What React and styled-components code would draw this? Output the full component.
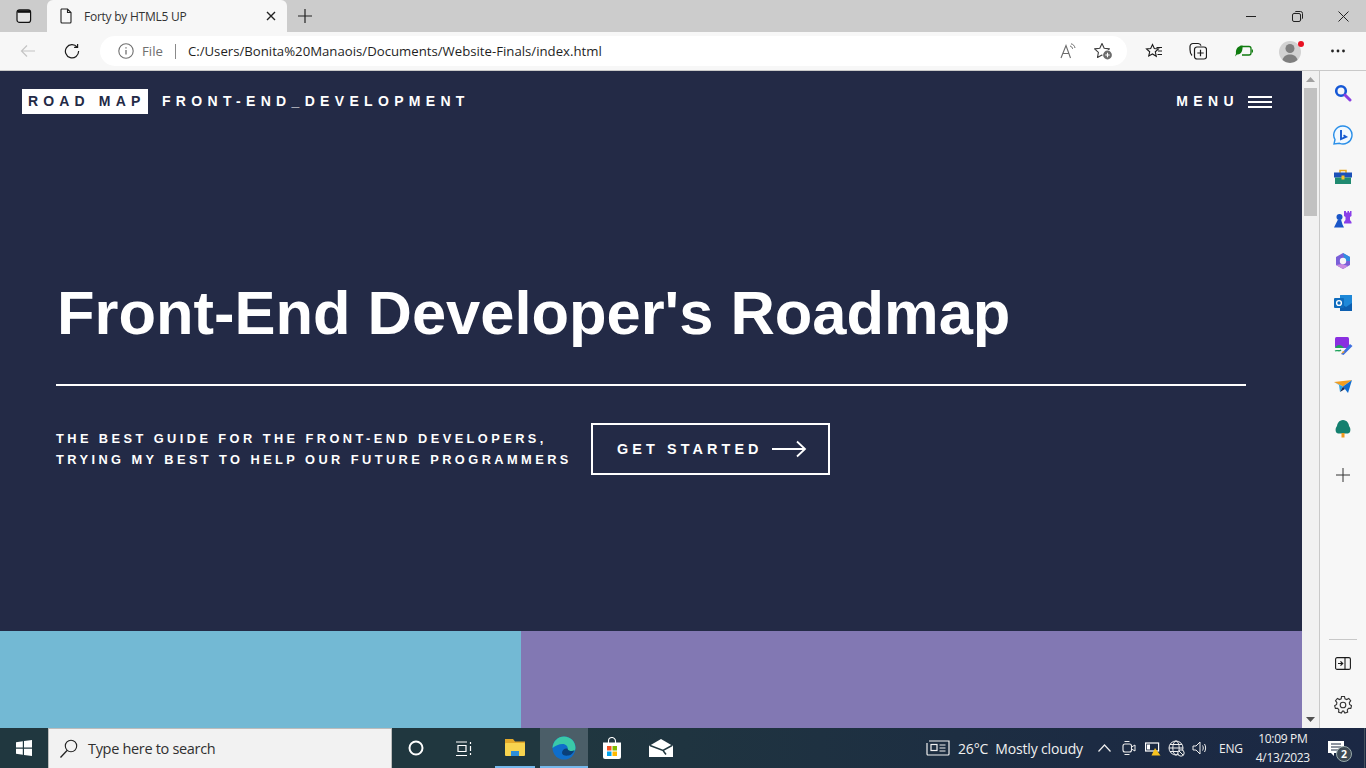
import React from "react";
import styled, { createGlobalStyle } from "styled-components";

const Global = createGlobalStyle`
  html, body { margin: 0; padding: 0; height: 100%; overflow: hidden; background: #232a46; }
  * { box-sizing: border-box; }
`;
const ui = `"Open Sans", "Noto Sans", sans-serif`;
const web = `"Liberation Sans", Arial, sans-serif`;

const Screen = styled.div`width:1366px;height:768px;display:flex;flex-direction:column;overflow:hidden;font-family:${ui};`;

const TabStrip = styled.div`height:32px;flex:none;background:#cccccc;display:flex;align-items:flex-end;`;
const TabToggle = styled.div`width:47px;height:32px;display:flex;align-items:center;justify-content:center;`;
const Tab = styled.div`width:240px;height:32px;background:#f7f7f7;border-radius:6px 6px 0 0;display:flex;align-items:center;padding:0 11px 0 12px;`;
const TabTitle = styled.span`flex:1;margin-left:11px;font-size:12px;letter-spacing:-.25px;color:#333;white-space:nowrap;`;
const NewTab = styled.div`width:36px;height:32px;display:flex;align-items:center;justify-content:center;`;
const Spacer = styled.div`flex:1;`;
const WinButton = styled.div`width:46px;height:32px;display:flex;align-items:center;justify-content:center;`;

const Toolbar = styled.div`height:39px;flex:none;background:#f7f7f7;border-bottom:1px solid #c9c9c9;display:flex;align-items:center;padding-left:3px;`;
const NavButton = styled.div`width:${p=>p.$w||44}px;height:30px;display:flex;align-items:center;justify-content:center;flex:none;`;
const Address = styled.div`width:1027px;height:30px;margin-left:9px;background:#fff;border-radius:15px;display:flex;align-items:center;padding-left:18px;font-size:13.2px;color:#1f1f1f;flex:none;`;
const FileLabel = styled.span`color:#6f6f6f;margin-left:8px;`;
const Sep = styled.span`width:1px;height:15px;background:#8a8a8a;margin:0 12px;`;
const Url = styled.span`flex:1;white-space:nowrap;`;
const AddressIcons = styled.div`display:flex;align-items:center;gap:18px;padding-right:14px;`;
const ToolIcons = styled.div`display:flex;align-items:center;margin-left:5px;`;

const Main = styled.div`flex:1;display:flex;min-height:0;`;
const Page = styled.div`width:1302px;display:flex;flex-direction:column;background:#232a46;font-family:${web};`;
const Hero = styled.section`height:560px;flex:none;color:#fff;display:flex;flex-direction:column;`;
const Header = styled.header`height:60px;display:flex;align-items:flex-start;padding:18px 30px 0 22px;font-weight:700;font-size:14px;`;
const Logo = styled.div`width:126px;height:25px;background:#fff;color:#232a46;letter-spacing:5.15px;padding-left:6px;line-height:24px;white-space:nowrap;`;
const Brand = styled.div`margin-left:14px;letter-spacing:5.32px;line-height:24px;white-space:nowrap;`;
const MenuLink = styled.div`margin-left:auto;display:flex;align-items:center;letter-spacing:5.4px;line-height:24px;`;
const Burger = styled.span`display:flex;flex-direction:column;gap:3px;width:24px;margin-left:9px;margin-top:2px;
  i{display:block;height:2px;background:#fff;}`;
const HeroBody = styled.div`padding:138px 56px 0 56px;`;
const Title = styled.h1`margin:0;padding-left:1px;font-size:61.45px;line-height:88px;font-weight:700;white-space:nowrap;`;
const Rule = styled.div`height:2px;background:#fff;margin-top:27px;`;
const Lead = styled.div`display:flex;align-items:center;margin-top:37px;`;
const Tagline = styled.p`margin:0;font-size:12.8px;font-weight:700;letter-spacing:3.43px;line-height:21px;white-space:nowrap;width:535px;`;
const Cta = styled.div`width:239px;height:52px;border:2px solid #fff;display:flex;align-items:center;padding-left:24px;font-size:14.4px;font-weight:700;letter-spacing:4.1px;white-space:nowrap;`;
const Tiles = styled.div`flex:1;display:flex;`;
const Tile = styled.div`width:${p=>p.$w}px;flex:${p=>p.$w?"none":"1"};background:${p=>p.$c};`;

const Scrollbar = styled.div`width:17px;background:#f1f1f1;display:flex;flex-direction:column;align-items:center;`;
const Arrow = styled.div`height:17px;flex:none;display:flex;align-items:center;justify-content:center;`;
const Thumb = styled.div`width:13px;height:128px;background:#c1c1c1;`;
const Sidebar = styled.aside`width:47px;flex:none;background:#f7f7f7;border-left:1px solid #c9c9c9;display:flex;flex-direction:column;align-items:center;`;
const SideIcon = styled.div`height:${p=>p.$h||42}px;width:100%;flex:none;display:flex;align-items:center;justify-content:center;`;
const SideRule = styled.div`width:28px;height:1px;background:#c8c8c8;margin-bottom:4px;`;

const Taskbar = styled.footer`height:40px;flex:none;display:flex;align-items:stretch;background:linear-gradient(90deg,#20373f 0%,#20373f 40%,#1c2b43 80%,#1b2844 100%);color:#fff;font-size:13px;`;
const Start = styled.div`width:48px;display:flex;align-items:center;justify-content:center;`;
const Search = styled.div`width:344px;background:#f2f2f2;border:1px solid #bcbcbc;border-width:1px 1px 0;display:flex;align-items:center;padding-left:10px;color:#303030;font-size:14.5px;letter-spacing:-.32px;`;
const SearchText = styled.span`margin-left:10px;`;
const TaskIcon = styled.div`width:${p=>p.$w||49}px;display:flex;align-items:center;justify-content:center;background:${p=>p.$active?"#4b5e68":"transparent"};box-shadow:${p=>p.$line?"inset 0 -2px 0 #76b9ed":"none"};margin-left:${p=>p.$ml||0}px;flex:none;`;
const Tray = styled.div`flex:1;display:flex;align-items:center;padding-left:240px;white-space:nowrap;`;
const Weather = styled.span`font-size:14px;letter-spacing:-.15px;color:#f0f0f0;margin-left:8px;`;
const TrayItem = styled.span`display:flex;align-items:center;justify-content:center;margin-left:${p=>p.$ml||0}px;flex:none;`;
const Lang = styled.span`font-size:12px;margin-left:11px;letter-spacing:-.2px;color:#eee;`;
const Clock = styled.span`font-size:12px;letter-spacing:-.3px;line-height:19px;text-align:center;margin-left:13px;color:#f0f0f0;`;
const Notif = styled.span`position:relative;display:flex;margin-left:18px;`;
const NotifBadge = styled.span`position:absolute;left:8px;top:5px;width:16px;height:16px;border-radius:50%;background:#3e4a55;border:1px solid #9aa;font-size:10.5px;font-weight:700;line-height:14px;text-align:center;`;
const EndStrip = styled.span`width:1px;align-self:stretch;background:#44525e;margin-left:19px;`;

const Svg = styled.svg`color:${p=>p.$c||"inherit"};margin-left:${p=>p.$ml||0}px;flex:none;`;
const S = ({w=16,h=16,children,...r}) => <Svg width={w} height={h} viewBox={`0 0 ${w} ${h}`} fill="none" stroke="currentColor" {...r}>{children}</Svg>;

export default function App(){
  return <Screen><Global/>
    <TabStrip>
      <TabToggle><S w={16} h={16} $c="#111"><rect x="1" y="1.800" width="13.600" height="12.600" rx="2.500" strokeWidth="1.200" fill="#e4e4e4"/><rect x="1.500" y="2.200" width="12.600" height="2.600" fill="#111" stroke="none"/></S></TabToggle>
      <Tab>
        <S w={14} h={16} $c="#222"><path d="M2.500 1h6l3.500 3.500V14a1 1 0 0 1-1 1H3a1 1 0 0 1-1-1V2a1 1 0 0 1 .5-1zM8.500 1v3.500H12" strokeWidth="1.100"/></S>
        <TabTitle>Forty by HTML5 UP</TabTitle>
        <S w={10} h={10} $c="#222"><path d="M1 1l8 8M9 1l-8 8" strokeWidth="1.400"/></S>
      </Tab>
      <NewTab><S w={16} h={16} $c="#222"><path d="M8 1v14M1 8h14" strokeWidth="1.200"/></S></NewTab>
      <Spacer/>
      <WinButton><S w={10} h={10} $c="#222"><path d="M0 5.500h10" strokeWidth="1"/></S></WinButton>
      <WinButton><S w={11} h={11} $c="#222"><rect x=".5" y="2.500" width="8" height="8" rx="1.500"/><path d="M3 1.200c.2-.5.6-.7 1-.7h4.500a2 2 0 0 1 2 2V7c0 .4-.2.8-.7 1"/></S></WinButton>
      <WinButton><S w={11} h={11} $c="#222"><path d="M.5.5l10 10M10.500.5l-10 10" strokeWidth="1"/></S></WinButton>
    </TabStrip>
    <Toolbar>
      <NavButton $w={50}><S w={16} h={14} $c="#c4c4c4"><path d="M15 7H1.500M7 1.500L1.500 7 7 12.500" strokeWidth="1.200"/></S></NavButton>
      <NavButton $w={38}><S w={16} h={16} $c="#1c1c1c"><path d="M13.200 4.200A6.600 6.600 0 1 0 14.600 8M13.600 .9v3.500h-3.500" strokeWidth="1.200"/></S></NavButton>
      <Address>
        <S w={16} h={16} $c="#707070"><circle cx="8" cy="8" r="7.200" strokeWidth="1.100"/><path d="M8 7v4.500M8 4.200v1.400" strokeWidth="1.300"/></S>
        <FileLabel>File</FileLabel><Sep/>
        <Url>C:/Users/Bonita%20Manaois/Documents/Website-Finals/index.html</Url>
        <AddressIcons>
          <S w={16} h={16} $c="#6b6b6b"><path d="M1 15L6 2.500 10.500 15M2.700 10.500h6.400" strokeWidth="1.100"/><path d="M10 3c1.500.4 2.300 1.300 2.600 2.800M11 .8c2.200.5 3.600 2 4 4.200" strokeWidth="1"/></S>
          <S w={19} h={18} $c="#3c3c3c"><path d="M8 1.500l2.200 4.700 5.200.7-3.800 3.500.9 5.100L8 13l-4.500 2.500.9-5.100L.6 6.900l5.200-.7z" strokeWidth="1.100" strokeLinejoin="round"/><circle cx="13.500" cy="13" r="5.200" fill="#fff" stroke="none"/><circle cx="13.500" cy="13" r="4.400" fill="#6b6b6b" stroke="none"/><path d="M13.500 10.800v4.400M11.300 13h4.400" stroke="#fff" strokeWidth="1.100"/></S>
        </AddressIcons>
      </Address>
      <ToolIcons>
        <NavButton $w={44}><S w={18} h={16} $c="#1a1a1a"><path d="M7.500 1.500l1.800 4 4.200.5-3.200 2.800 1 4.500-3.800-2.300L3.700 13l1-4.200L1.500 6l4.200-.5z" strokeWidth="1.100"/><path d="M11.500 4.500h5.500M13 8h4M12.500 11.500h4.500" strokeWidth="1.100"/></S></NavButton>
        <NavButton $w={44}><S w={18} h={18} $c="#1a1a1a"><path d="M3 13.500C1.500 12 1 10 1 7.500V4.500A3 3 0 0 1 4 1.500h5a3 3 0 0 1 3 2.200" strokeWidth="1.200"/><rect x="5.500" y="5" width="12" height="12" rx="2.500" strokeWidth="1.200"/><path d="M11.500 7.800v6.400M8.300 11h6.400" strokeWidth="1.200"/></S></NavButton>
        <NavButton $w={48}><S w={18} h={12} $c="#0f7b0f"><path d="M5 1.500h9a2 2 0 0 1 2 2v4.500a2 2 0 0 1-2 2H7" strokeWidth="1.300"/><path d="M17.300 4.500v3" strokeWidth="1.300"/><path d="M7.500.5C3 1 .5 3.500 1 8.500L0 11.500l2-2C6 10 8 6 7.500.5z" fill="currentColor" stroke="none"/></S></NavButton>
        <NavButton $w={48}><S w={26} h={26} $c="#8c8c8c"><circle cx="11" cy="14" r="11" fill="#d2d2d2" stroke="none"/><circle cx="11" cy="10.500" r="4.500" fill="#7f7f7f" stroke="none"/><path d="M3.500 22c1-4 4-5.500 7.500-5.500s6.500 1.500 7.500 5.500a11 11 0 0 1-15 0z" fill="#7f7f7f" stroke="none"/><circle cx="22" cy="6" r="3" fill="#e81123" stroke="none"/></S></NavButton>
        <NavButton $w={44}><S w={14} h={4} $c="#222"><g fill="#222" stroke="none"><circle cx="1.500" cy="2" r="1.400"/><circle cx="7" cy="2" r="1.400"/><circle cx="12.500" cy="2" r="1.400"/></g></S></NavButton>
      </ToolIcons>
    </Toolbar>
    <Main>
      <Page>
        <Hero>
          <Header>
            <Logo>ROAD MAP</Logo>
            <Brand>FRONT-END_DEVELOPMENT</Brand>
            <MenuLink>MENU<Burger><i/><i/><i/></Burger></MenuLink>
          </Header>
          <HeroBody>
            <Title>Front-End Developer's Roadmap</Title>
            <Rule/>
            <Lead>
              <Tagline>THE BEST GUIDE FOR THE FRONT-END DEVELOPERS,<br/>TRYING MY BEST TO HELP OUR FUTURE PROGRAMMERS</Tagline>
              <Cta>GET STARTED<S w={36} h={18} $ml={8} $c="#fff"><path d="M1 9h33M26 1.500L34 9l-8 7.500" strokeWidth="1.800"/></S></Cta>
            </Lead>
          </HeroBody>
        </Hero>
        <Tiles><Tile $w={521} $c="#73b9d4"/><Tile $c="#8278b3"/></Tiles>
      </Page>
      <Scrollbar>
        <Arrow><S w={9} h={5}><path d="M0 5L4.500 0 9 5z" fill="#a0a0a0" stroke="none"/></S></Arrow>
        <Thumb/>
        <Spacer/>
        <Arrow><S w={9} h={5}><path d="M0 0L4.500 5 9 0z" fill="#505050" stroke="none"/></S></Arrow>
      </Scrollbar>
      <Sidebar>
        <SideIcon $h={43}><S w={18} h={18}><circle cx="7" cy="7" r="4.800" stroke="#1558d6" strokeWidth="2.600"/><path d="M11 11l5 5" stroke="#8a3fe0" strokeWidth="3" strokeLinecap="round"/></S></SideIcon>
        <SideIcon><S w={20} h={20}><path d="M10 1a9 9 0 1 1-3.500 17.300L1 19l1-4.500A9 9 0 0 1 10 1z" stroke="#2a8fe8" strokeWidth="1.400" fill="#f2f9ff"/><path d="M8 5v9l5-2.200-2.500-1.500" stroke="#1559d0" strokeWidth="1.900"/></S></SideIcon>
        <SideIcon><S w={18} h={16}><path d="M6 4V1.500h6V4" stroke="#e8a920" strokeWidth="1.500"/><rect x="0" y="3.500" width="18" height="5" fill="#1c50b8" stroke="none"/><rect x="1" y="8.500" width="16" height="6.500" fill="#1f8a70" stroke="none"/><rect x="7.500" y="6.500" width="3" height="4" fill="#f4c22b" stroke="none"/></S></SideIcon>
        <SideIcon><S w={18} h={18}><g stroke="none"><path d="M10 1h2v1.500h1.500V1h1.500v1.500h1V1h1.500v5l-1.500 1v3l1.500 2v1.500H10V12l1.500-2V7L10 6z" fill="#8a3fe8"/><circle cx="5.500" cy="7" r="3" fill="#1a56c8"/><path d="M4 9.500h3l1.500 5L10 17.500H0l1.500-3z" fill="#1a56c8"/></g></S></SideIcon>
        <SideIcon><S w={18} h={18}><path d="M9 1l7 4v8l-7 4-7-4V5z" fill="#7a5fd8" stroke="none"/><path d="M9 1l7 4v4H11z" fill="#2f8fe0" stroke="none"/><path d="M2 13l7 4 5-3-6-2z" fill="#c98ae0" stroke="none"/><circle cx="9" cy="9" r="3.200" fill="#f7f7f7" stroke="none"/></S></SideIcon>
        <SideIcon><S w={18} h={18}><g stroke="none"><rect x="6" y="1" width="12" height="15" fill="#1e88d8"/><path d="M6 9l6 4 6-4v8H6z" fill="#0d5fb0"/><rect x="0" y="4" width="10" height="10" rx="1" fill="#0f6cbd"/></g><circle cx="5" cy="9" r="2.400" stroke="#fff" strokeWidth="1.400"/></S></SideIcon>
        <SideIcon><S w={19} h={19}><g stroke="none"><rect x="1" y="1" width="14" height="11" rx="1.500" fill="#8a2fe0"/><path d="M1 12c2-4 6-4 9 0z" fill="#1fa35c"/><path d="M7 18l9-10 2.500 2-9 9z" fill="#3d6fe0"/><path d="M7 18l2-3 2 1z" fill="#f4a82b"/><path d="M1 15c2-1.500 4 1 6-1" stroke="#1fa35c" strokeWidth="1.300" fill="none"/></g></S></SideIcon>
        <SideIcon><S w={18} h={14}><g stroke="none"><path d="M0 2L18 0l-9 6.500z" fill="#f29d1f"/><path d="M0 2l5 3 1 7 3-5.500z" fill="#29a3e8"/><path d="M18 0l-4 13-5-6.500z" fill="#0f6cd0"/><path d="M6 12l3-5.500 2 2.500z" fill="#1b2a55"/></g></S></SideIcon>
        <SideIcon><S w={16} h={18}><g stroke="none"><path d="M8 0C4 0 2 4 2 6 0 8 0 13 3 13.500h10c3-.5 3-5.500 1-7.500 0-2-2-6-6-6z" fill="#14806f"/><rect x="6.500" y="13" width="3" height="4.500" fill="#ef9a1f"/></g></S></SideIcon>
        <SideIcon $h={50}><S w={14} h={14} $c="#333"><path d="M7 0v14M0 7h14" strokeWidth="1"/></S></SideIcon>
        <Spacer/>
        <SideRule/>
        <SideIcon $h={38}><S w={16} h={13} $c="#1a1a1a"><rect x=".6" y=".6" width="14.800" height="11.800" rx="1.500" strokeWidth="1.100"/><path d="M10 .6v11.800" strokeWidth="1.100"/><path d="M3 6.500h4.500M5.500 4.300l2.200 2.200-2.200 2.200" strokeWidth="1.200"/></S></SideIcon>
        <SideIcon $h={46}><S w={18} h={18} $c="#333"><path d="M7.500 1h3l.5 2.300 1.700.8 2.100-1.200 1.900 2.300-1.400 1.900.3 1.900 2 1.200-.8 2.700-2.300-.1-1.200 1.500.4 2.300-2.800 1-1.200-2H8.500l-1.200 2-2.800-1 .4-2.300-1.200-1.500-2.300.1L.6 10.200l2-1.200.3-1.900-1.400-1.900 1.900-2.300 2.100 1.200 1.700-.8z" strokeWidth="1.100" transform="translate(0 -.5)"/><circle cx="9" cy="9" r="2.800" strokeWidth="1.100"/></S></SideIcon>
      </Sidebar>
    </Main>
    <Taskbar>
      <Start><S w={18} h={18}><path d="M1 3.300l6.800-1V8.500H1zM9 2.100L17 1v7.500H9zM1 9.700h6.800v6L1 14.700zM9 9.700h8V17l-8-1.100z" fill="#fff" stroke="none"/></S></Start>
      <Search><S w={19} h={20} $c="#222"><circle cx="12" cy="7" r="5.700" strokeWidth="1.100"/><path d="M8 11.500L1.500 18.500" strokeWidth="1.300"/></S><SearchText>Type here to search</SearchText></Search>
      <TaskIcon $w={48}><S w={16} h={16} $c="#fff"><circle cx="8" cy="8" r="6.500" strokeWidth="2"/></S></TaskIcon>
      <TaskIcon $w={46}><S w={17} h={17} $c="#fff"><path d="M1 2h11M1 15.500h11M3 5.500h8v6H3zM15.500 2v2M15.500 6v5M15.500 13v2" strokeWidth="1.200"/></S></TaskIcon>
      <TaskIcon $w={40} $line $ml={9}><S w={22} h={20}><path d="M1 1h8l2 2.500h10V6H1z" fill="#e3a92a" stroke="none"/><rect x="1" y="5" width="20" height="13" rx="1" fill="#f8d44f" stroke="none"/><path d="M7 18v-5h8v5" fill="#2f8fd8" stroke="none"/></S></TaskIcon>
      <TaskIcon $w={48} $active $line $ml={5}><S w={24} h={24}><circle cx="12" cy="12" r="11.500" fill="#0f6ecb" stroke="none"/><path d="M.5 12C1 5 6 .5 12 .5c6.500 0 11.500 5 11.500 11.500 0 3-2.500 4.500-5 4-2-.4-3-1.500-3-2.500 1-3-1.500-5.500-5-5.500S3 10 .5 12z" fill="#3ac9a8" stroke="none"/><path d="M10 17c0-3 2.500-5 5.500-4.500 0 1 1 2.100 3 2.500 1.500.3 3 0 4-1-1 2-2.500 5-6 5.500-3.500.5-6.500-.5-6.500-2.500z" fill="#0a3f78" stroke="none"/></S></TaskIcon>
      <TaskIcon $w={48}><S w={18} h={22}><path d="M5.500 6V4a3.500 3.500 0 0 1 7 0v2" stroke="#fff" strokeWidth="1.100"/><path d="M0 5.500h18V20a2 2 0 0 1-2 2H2a2 2 0 0 1-2-2z" fill="#fff" stroke="none"/><rect x="4" y="9" width="4.500" height="4.500" fill="#f25022" stroke="none"/><rect x="9.500" y="9" width="4.500" height="4.500" fill="#7fba00" stroke="none"/><rect x="4" y="14.500" width="4.500" height="4.500" fill="#00a4ef" stroke="none"/><rect x="9.500" y="14.500" width="4.500" height="4.500" fill="#ffb900" stroke="none"/></S></TaskIcon>
      <TaskIcon $w={50}><S w={24} h={20}><path d="M0 8L12 1l12 7v11H0z" fill="#fff" stroke="none"/><path d="M1 7.500l13 5 9-5M14 12.500l3 4" stroke="#20373f" strokeWidth="1.500"/></S></TaskIcon>
      <Tray>
        <S w={24} h={16} $c="#f0f0f0"><path d="M3 1h20v13a1 1 0 0 1-1 1H2a1 1 0 0 1-1-1V3" strokeWidth="1.200"/><rect x="5" y="4.500" width="6" height="6" strokeWidth="1.200"/><path d="M13.500 5h6M13.500 8h6M13.500 11h6" strokeWidth="1.100"/></S>
        <Weather>26°C&nbsp; Mostly cloudy</Weather>
        <TrayItem $ml={15.500}><S w={13} h={8} $c="#eee"><path d="M.5 7.500L6.500 1l6 6.500" strokeWidth="1.200"/></S></TrayItem>
        <TrayItem $ml={10.500}><S w={14} h={16} $c="#eee"><rect x="1" y="4" width="8.500" height="8" rx="2" strokeWidth="1.100"/><path d="M9.500 7l3.500-2v6l-3.500-2M2.500 1.500h5M2.500 14.500h5" strokeWidth="1"/></S></TrayItem>
        <TrayItem $ml={9}><S w={16} h={16} $c="#fff"><rect x=".6" y="3" width="13" height="8" strokeWidth="1.200"/><rect x="2" y="4.500" width="3" height="5" fill="#fff" stroke="none"/><path d="M10 8l5.500 7.500h-9z" fill="#f7c21f" stroke="none"/></S></TrayItem>
        <TrayItem $ml={7.500}><S w={17} h={17} $c="#eee"><circle cx="8" cy="8" r="7" strokeWidth="1"/><ellipse cx="8" cy="8" rx="3.200" ry="7" strokeWidth="1"/><path d="M1 8h14M2 4.500h12M2 11.500h9" strokeWidth="1"/><circle cx="13" cy="13" r="3.200" fill="#1d2d42" strokeWidth="1"/><path d="M11 11l4 4" strokeWidth="1"/></S></TrayItem>
        <TrayItem $ml={6.500}><S w={16} h={14} $c="#eee"><path d="M1 5h3l4-4v12L4 9H1zM10.500 4.500c1 1.500 1 3.500 0 5M12.500 3c1.500 2.500 1.500 5.500 0 8" strokeWidth="1"/></S></TrayItem>
        <Lang>ENG</Lang>
        <Clock>10:09 PM<br/>4/13/2023</Clock>
        <Notif><S w={17} h={15}><path d="M0 0h16v12H6v3l-3-3H0z" fill="#fff" stroke="none"/><path d="M3 3h10M3 6h10M3 9h7" stroke="#1c2b43" strokeWidth="1"/></S><NotifBadge>2</NotifBadge></Notif>
        <EndStrip/>
      </Tray>
    </Taskbar>
  </Screen>;
}
